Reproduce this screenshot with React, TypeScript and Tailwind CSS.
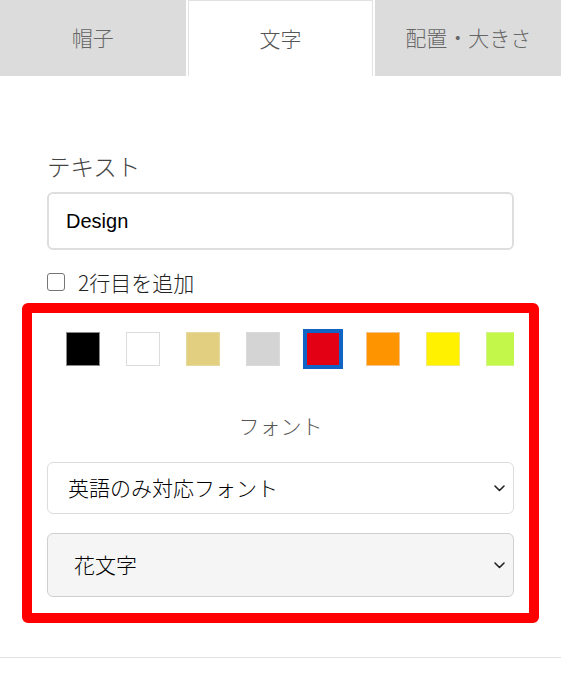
import React from "react";

const jp = { fontFamily: '"Noto Sans CJK JP", "Noto Sans", sans-serif' };

function Chevron() {
  return (
    <svg width="11" height="7" viewBox="0 0 11 7" className="shrink-0">
      <polyline points="1,1 5.5,5.5 10,1" fill="none" stroke="#222" strokeWidth="1.6" strokeLinecap="round" strokeLinejoin="round" />
    </svg>
  );
}

const swatches = [
  { bg: "bg-[#000000]", border: "border-[#8a8a8a]" },
  { bg: "bg-[#ffffff]", border: "border-[#dcdcdc]" },
  { bg: "bg-[#e2cf80]", border: "border-[#e6d9a0]" },
  { bg: "bg-[#d4d4d4]", border: "border-[#dadada]" },
  { bg: "bg-[#e30014]", border: "border-[#e30014]", selected: true },
  { bg: "bg-[#fe9400]", border: "border-[#f3c48a]" },
  { bg: "bg-[#fff100]", border: "border-[#f2e87a]" },
  { bg: "bg-[#c3f74a]", border: "border-[#d2f48a]" },
];

export default function App() {
  return (
    <div className="w-[561px] h-[673px] bg-white overflow-hidden font-light" style={jp}>
      <div className="grid grid-cols-3 gap-[2px] h-[76px]">
        <div className="bg-[#dcdcdc] flex items-center justify-center text-[21px] text-[#666]">帽子</div>
        <div className="bg-white border-x border-t border-[#e2e2e2] flex items-center justify-center text-[21px] text-[#555]">文字</div>
        <div className="bg-[#dcdcdc] flex items-center justify-center text-[21px] text-[#666]">配置・大きさ</div>
      </div>

      <div className="px-[47px] pt-[74px]">
        <div className="h-[32px] leading-[32px] text-[23.5px] text-[#444]">テキスト</div>
        <div className="mt-[10px] h-[58px] border-2 border-[#dedede] rounded-[6px] flex items-center pl-[17px] text-[20px] text-black font-normal" style={{ fontFamily: '"Liberation Sans", Arial, sans-serif' }}>
          Design
        </div>
        <div className="mt-[22px] h-[20px] flex items-center gap-[13px]">
          <div className="w-[18px] h-[18px] border-[1.5px] border-[#767676] rounded-[3px] bg-white" />
          <span className="text-[21px] leading-[20px] text-[#222]">2行目を追加</span>
        </div>
      </div>

      <div className="mx-[22px] mt-[11px] border-[10px] border-[#ff0000] rounded-[6px] px-[15px] pt-[16px] pb-[16px]">
        <div className="flex overflow-hidden pl-[6px] h-[40px]">
          {swatches.map((s, i) => (
            <div key={i} className="w-[60px] shrink-0 flex items-center justify-center">
              {s.selected ? (
                <div className="w-[40px] h-[40px] border-[4px] border-[#0f64c6] bg-[#e30014]" />
              ) : (
                <div className={`w-[34px] h-[34px] border ${s.bg} ${s.border}`} />
              )}
            </div>
          ))}
        </div>
        <div className="mt-[41px] h-[30px] leading-[30px] text-center text-[21px] text-[#555]">フォント</div>
        <div className="mt-[22px] h-[52px] bg-white border border-[#dcdcdc] rounded-[6px] flex items-center justify-between pl-[20px] pr-[8px] text-[21px] text-black">
          <span>英語のみ対応フォント</span>
          <Chevron />
        </div>
        <div className="mt-[19px] h-[64px] bg-[#f5f5f5] border border-[#cfcfcf] rounded-[6px] flex items-center justify-between pl-[26px] pr-[8px] text-[21px] text-black">
          <span>花文字</span>
          <Chevron />
        </div>
      </div>

      <div className="mt-[34px] border-t border-[#e0e0e0]" />
    </div>
  );
}
